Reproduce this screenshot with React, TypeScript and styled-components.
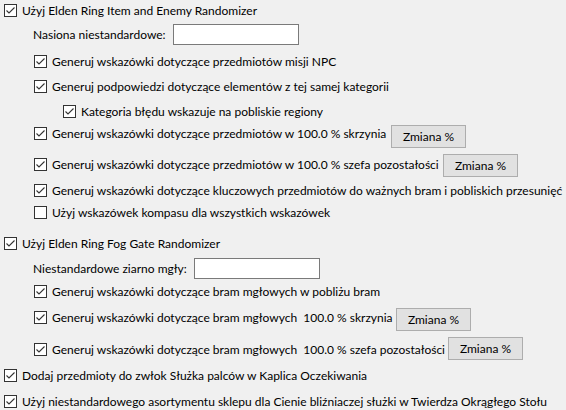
import React from "react";
import styled, { createGlobalStyle } from "styled-components";

const Global = createGlobalStyle`
  html, body { margin: 0; padding: 0; background: #f0f0f0; }
  body { overflow: hidden; width: 566px; height: 410px; }
`;

const Page = styled.div`
  width: 566px;
  height: 410px;
  overflow: hidden;
  background: #f0f0f0;
  font-family: "Lato", "Segoe UI", sans-serif;
  font-size: 12px;
  color: #000;
  display: flex;
  flex-direction: column;
  white-space: nowrap;
`;

const Row = styled.div<{ $gap: number; $indent: number }>`
  display: flex;
  align-items: center;
  height: 21px;
  flex: none;
  margin-top: ${(p) => p.$gap}px;
  padding-left: ${(p) => p.$indent}px;
`;

const Check = styled.label<{ $w?: number }>`
  display: flex;
  align-items: center;
  gap: 5px;
  flex: none;
  width: ${(p) => (p.$w ? `${p.$w}px` : "auto")};
`;

const Box = styled.span`
  width: 13px;
  height: 13px;
  box-sizing: border-box;
  border: 1px solid #333333;
  background: #ffffff;
  display: flex;
  align-items: center;
  justify-content: center;
  flex: none;
`;

const Label = styled.span<{ $w: number }>`
  width: ${(p) => p.$w}px;
  flex: none;
`;

const TextBox = styled.div`
  width: 126px;
  height: 21px;
  box-sizing: border-box;
  border: 1px solid #7a7a7a;
  background: #ffffff;
  flex: none;
`;

const Button = styled.div<{ $dy: number }>`
  width: 75px;
  height: 23px;
  box-sizing: border-box;
  border: 1px solid #adadad;
  background: #e1e1e1;
  display: flex;
  align-items: center;
  justify-content: center;
  flex: none;
  margin-top: ${(p) => p.$dy}px;
`;

const CheckBox: React.FC<{ checked?: boolean; text: string; w?: number }> = ({
  checked = true,
  text,
  w,
}) => (
  <Check $w={w}>
    <Box>
      {checked && (
        <svg width="11" height="11" viewBox="0 0 11 11">
          <path d="M1.5 5.5 L4 8 L9.5 2.5" fill="none" stroke="#333" strokeWidth="1.1" />
        </svg>
      )}
    </Box>
    <span>{text}</span>
  </Check>
);

export default function App() {
  return (
    <Page>
      <Global />
      <Row $gap={0} $indent={4}>
        <CheckBox text="Użyj Elden Ring Item and Enemy Randomizer" />
      </Row>
      <Row $gap={3} $indent={33}>
        <Label $w={140}>Nasiona niestandardowe:</Label>
        <TextBox />
      </Row>
      <Row $gap={6} $indent={34}>
        <CheckBox text="Generuj wskazówki dotyczące przedmiotów misji NPC" />
      </Row>
      <Row $gap={4} $indent={34}>
        <CheckBox text="Generuj podpowiedzi dotyczące elementów z tej samej kategorii" />
      </Row>
      <Row $gap={4} $indent={63}>
        <CheckBox text="Kategoria błędu wskazuje na pobliskie regiony" />
      </Row>
      <Row $gap={1} $indent={34}>
        <CheckBox w={357} text="Generuj wskazówki dotyczące przedmiotów w 100.0 % skrzynia" />
        <Button $dy={6}>Zmiana %</Button>
      </Row>
      <Row $gap={10} $indent={34}>
        <CheckBox w={409} text="Generuj wskazówki dotyczące przedmiotów w 100.0 % szefa pozostałości" />
        <Button $dy={2}>Zmiana %</Button>
      </Row>
      <Row $gap={5} $indent={34}>
        <CheckBox text="Generuj wskazówki dotyczące kluczowych przedmiotów do ważnych bram i pobliskich przesunięć" />
      </Row>
      <Row $gap={1} $indent={34}>
        <CheckBox checked={false} text="Użyj wskazówek kompasu dla wszystkich wskazówek" />
      </Row>
      <Row $gap={10} $indent={4}>
        <CheckBox text="Użyj Elden Ring Fog Gate Randomizer" />
      </Row>
      <Row $gap={4} $indent={33}>
        <Label $w={161}>Niestandardowe ziarno mgły:</Label>
        <TextBox />
      </Row>
      <Row $gap={2} $indent={34}>
        <CheckBox text="Generuj wskazówki dotyczące bram mgłowych w pobliżu bram" />
      </Row>
      <Row $gap={5} $indent={34}>
        <CheckBox w={362} text={"Generuj wskazówki dotyczące bram mgłowych\u00a0 100.0 % skrzynia"} />
        <Button $dy={4}>Zmiana %</Button>
      </Row>
      <Row $gap={11} $indent={34}>
        <CheckBox w={414} text={"Generuj wskazówki dotyczące bram mgłowych\u00a0 100.0 % szefa pozostałości"} />
        <Button $dy={-2}>Zmiana %</Button>
      </Row>
      <Row $gap={5} $indent={4}>
        <CheckBox text="Dodaj przedmioty do zwłok Służka palców w Kaplica Oczekiwania" />
      </Row>
      <Row $gap={5} $indent={4}>
        <CheckBox text="Użyj niestandardowego asortymentu sklepu dla Cienie bliźniaczej służki w Twierdza Okrągłego Stołu" />
      </Row>
    </Page>
  );
}
